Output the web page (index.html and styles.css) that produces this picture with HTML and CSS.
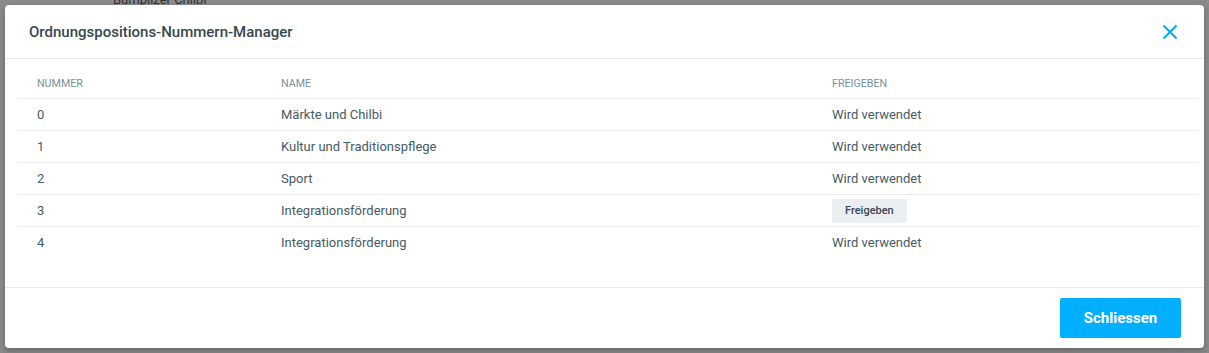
FILE: index.html
```html
<!DOCTYPE html>
<html lang="de">
<head>
    <meta charset="UTF-8">
    <title>Ordnungspositions-Nummern-Manager</title>
    <link rel="stylesheet" href="styles.css">
</head>
<body>

<div class="backdrop-text"><span>Bümplizer Chilbi</span></div>

<div class="modal">
    <div class="modal-header">
        <h2>Ordnungspositions-Nummern-Manager</h2>
        <button class="close" type="button" aria-label="Schliessen">
            <svg width="16" height="16" viewBox="0 0 16 16">
                <path d="M1.5 1.5 L14.5 14.5 M14.5 1.5 L1.5 14.5" stroke="#03a9f4" stroke-width="2" fill="none"/>
            </svg>
        </button>
    </div>

    <div class="modal-body">
        <table>
            <thead>
                <tr>
                    <th class="col-nr">Nummer</th>
                    <th class="col-name">Name</th>
                    <th>Freigeben</th>
                </tr>
            </thead>
            <tbody>
                <tr><td>0</td><td>Märkte und Chilbi</td><td>Wird verwendet</td></tr>
                <tr><td>1</td><td>Kultur und Traditionspflege</td><td>Wird verwendet</td></tr>
                <tr><td>2</td><td>Sport</td><td>Wird verwendet</td></tr>
                <tr><td>3</td><td>Integrationsförderung</td><td><button class="release" type="button">Freigeben</button></td></tr>
                <tr><td>4</td><td>Integrationsförderung</td><td>Wird verwendet</td></tr>
            </tbody>
        </table>
    </div>

    <div class="modal-footer">
        <button class="primary" type="button">Schliessen</button>
    </div>
</div>

</body>
</html>
```

FILE: styles.css
```css
body {
    font-family: 'Roboto', 'Liberation Sans', sans-serif;
    margin: 0;
    padding: 0;
    background-color: #8a8a8a;
    height: 353px;
    overflow: hidden;
}
.backdrop-text {
    height: 5px;
    overflow: hidden;
    padding-left: 113px;
}
.backdrop-text span {
    display: block;
    margin-top: -8px;
    font-size: 13px;
    line-height: 16px;
    color: #2f2f2f;
}
.modal {
    margin: 0 5px;
    height: 343px;
    background: #ffffff;
    border-radius: 4px;
    box-shadow: 0 3px 6px rgba(0, 0, 0, 0.25);
    display: flex;
    flex-direction: column;
}
.modal-header {
    height: 53px;
    display: flex;
    align-items: center;
    justify-content: space-between;
    padding: 0 26px 0 24px;
    border-bottom: 1px solid #e8e8e8;
}
.modal-header h2 {
    margin: 0;
    font-size: 15px;
    font-weight: 500;
    color: #37474f;
}
.close {
    background: none;
    border: none;
    padding: 0;
    width: 16px;
    height: 16px;
    margin-top: 1px;
    cursor: pointer;
}
.modal-body {
    flex: 1;
    padding: 0 7px 0 13px;
}
table {
    width: 100%;
    border-collapse: collapse;
}
th, td {
    padding: 0 19px;
    text-align: left;
    border-bottom: 1px solid #ebebeb;
}
th {
    height: 29px;
    padding-top: 10px;
    font-size: 10.7px;
    font-weight: 400;
    text-transform: uppercase;
    color: #78909c;
}
td {
    height: 31px;
    font-size: 13px;
    color: #455a64;
}
tbody tr:last-child td {
    border-bottom: none;
}
.col-nr {
    width: 206px;
}
.col-name {
    width: 513px;
}
.release {
    background: #eceff1;
    border: none;
    border-radius: 2px;
    height: 24px;
    padding: 0 13px;
    font-family: inherit;
    font-size: 11px;
    font-weight: 500;
    color: #37474f;
    cursor: pointer;
}
.modal-footer {
    height: 60px;
    border-top: 1px solid #e8e8e8;
    display: flex;
    align-items: center;
    justify-content: flex-end;
    padding: 0 23px;
}
.primary {
    background: #00b0ff;
    color: white;
    border: none;
    border-radius: 2px;
    width: 121px;
    height: 40px;
    font-family: inherit;
    font-size: 15px;
    font-weight: 700;
    cursor: pointer;
}
```
